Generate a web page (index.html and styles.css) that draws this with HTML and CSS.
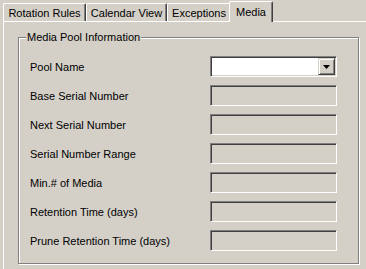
FILE: index.html
```html
<!DOCTYPE html>
<html>
<head>
<meta charset="utf-8">
<link rel="stylesheet" href="styles.css">
</head>
<body>
<div class="tabs">
  <div class="tab t1">Rotation Rules</div>
  <div class="tab t2">Calendar View</div>
  <div class="tab t3">Exceptions</div>
  <div class="tab active t4">Media</div>
</div>
<div class="panel">
  <div class="group">
    <div class="group-title">Media Pool Information</div>
    <div class="form">
      <div class="label">Pool Name</div>
      <div class="field combo"><div class="combo-btn"><svg width="7" height="4" viewBox="0 0 7 4"><path d="M0 0h7L3.5 4z" fill="#000"/></svg></div></div>
      <div class="label">Base Serial Number</div>
      <div class="field"></div>
      <div class="label">Next Serial Number</div>
      <div class="field"></div>
      <div class="label">Serial Number Range</div>
      <div class="field"></div>
      <div class="label">Min.# of Media</div>
      <div class="field"></div>
      <div class="label">Retention Time (days)</div>
      <div class="field"></div>
      <div class="label">Prune Retention Time (days)</div>
      <div class="field"></div>
    </div>
  </div>
</div>
</body>
</html>
```
FILE: styles.css
```css
html, body {
  margin: 0;
  padding: 0;
  background: #d4d0c8;
  width: 366px;
  height: 269px;
  overflow: hidden;
  font-family: "Liberation Sans", Arial, sans-serif;
  font-size: 11px;
  color: #000;
}
.tabs {
  display: flex;
  align-items: flex-end;
  height: 21px;
  padding-left: 3px;
}
.tab {
  box-sizing: border-box;
  height: 18px;
  display: flex;
  align-items: center;
  justify-content: center;
  border-top: 1px solid #fff;
  border-left: 1px solid #fff;
  border-right: 1px solid #404040;
  box-shadow: inset -1px 0 0 #808080;
  border-top-left-radius: 2px;
  border-top-right-radius: 2px;
  background: #d4d0c8;
  padding-top: 1px;
}
.t1 { width: 83px; }
.t2 { width: 81px; }
.t3 { width: 64px; }
.t4 { width: 44px; }
.tab.active {
  height: 21px;
  margin-bottom: -1px;
  margin-left: -2px;
  position: relative;
  z-index: 1;
  padding-top: 0;
}
.panel {
  box-sizing: border-box;
  margin-left: 3px;
  width: 363px;
  height: 248px;
  border-top: 1px solid #fff;
  border-left: 1px solid #fff;
  padding-top: 15px;
  padding-left: 14px;
}
.group {
  box-sizing: border-box;
  width: 341px;
  display: flex;
  flex-direction: column;
  border: 1px solid #808080;
  box-shadow: inset 1px 1px 0 #fff, 1px 1px 0 #fff;
  padding-bottom: 12px;
}
.group-title {
  align-self: flex-start;
  margin-top: -7px;
  margin-left: 7px;
  padding: 0 1px;
  line-height: 13px;
  background: #d4d0c8;
}
.form {
  display: grid;
  grid-template-columns: 180px 127px;
  grid-auto-rows: 21px;
  row-gap: 8px;
  align-items: center;
  margin-left: 11px;
  margin-top: 12px;
}
.label {
  line-height: 13px;
  padding-top: 1px;
}
.field {
  box-sizing: border-box;
  height: 21px;
  border: 1px solid;
  border-color: #808080 #fff #fff #808080;
  box-shadow: inset 1px 1px 0 #404040, inset -1px -1px 0 #d4d0c8;
  background: #d4d0c8;
}
.combo {
  background: #fff;
  display: flex;
  justify-content: flex-end;
  padding: 1px;
}
.combo-btn {
  box-sizing: border-box;
  width: 17px;
  height: 17px;
  background: #d4d0c8;
  border: 1px solid;
  border-color: #d4d0c8 #404040 #404040 #d4d0c8;
  box-shadow: inset 1px 1px 0 #fff, inset -1px -1px 0 #808080;
  display: flex;
  align-items: center;
  justify-content: center;
}
.combo-btn svg {
  display: block;
}
```
